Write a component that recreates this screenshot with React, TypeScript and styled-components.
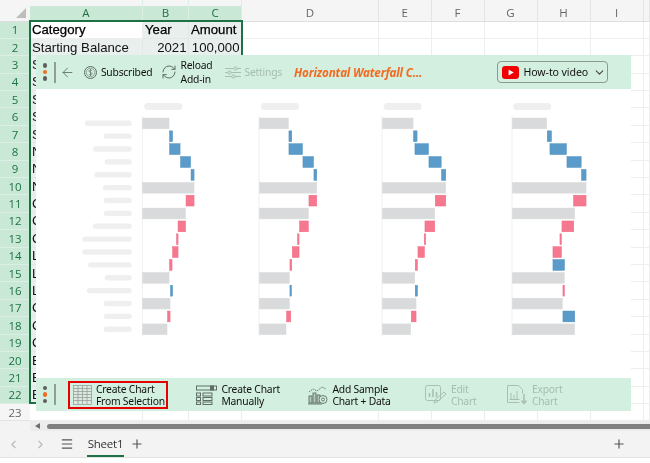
import React from "react";
import styled, { createGlobalStyle } from "styled-components";
import { ArrowLeft, ChevronDown, ChevronLeft, ChevronRight, Menu, Plus, RefreshCw } from "lucide-react";

const Global = createGlobalStyle`
  html, body { margin: 0; padding: 0; background: #fff; }
  #root { width: 650px; height: 463px; overflow: hidden; }
`;

const COLS = [113, 46, 53, 137, 52.5, 53, 53, 53, 53, 6.5];
const LETTERS = ["A", "B", "C", "D", "E", "F", "G", "H", "I", ""];

const Page = styled.div`
  position: relative;
  width: 650px;
  height: 463px;
  overflow: hidden;
  background: #fff;
  font-family: "Liberation Sans", Arial, sans-serif;
  filter: blur(0.3px);
`;
const Sheet = styled.div`
  display: grid;
  grid-template-columns: 30px ${COLS.map((c) => `${c}px`).join(" ")};
  grid-template-rows: 21.5px repeat(23, 17.4px);
`;
const Corner = styled.div`
  background: #f5f5f5;
  border-bottom: 1px solid #dedede;
  position: relative;
  &::after {
    content: "";
    position: absolute;
    right: 4px;
    bottom: 3px;
    border-style: solid;
    border-width: 0 0 10px 10px;
    border-color: transparent transparent #bdbdbd transparent;
  }
`;
const ColHead = styled.div<{ $sel?: boolean }>`
  box-sizing: border-box;
  display: flex;
  align-items: flex-end;
  justify-content: center;
  padding-bottom: 1px;
  font-size: 11.5px;
  font-family: "Open Sans", sans-serif;
  color: ${(p) => (p.$sel ? "#1e7145" : "#666")};
  background: ${(p) => (p.$sel ? "linear-gradient(#f5f5f5 6px, #c9e9d6 6px)" : "#f5f5f5")};
  border-right: 1px solid ${(p) => (p.$sel ? "#dcefe4" : "#e4e4e4")};
  border-bottom: 1px solid #dedede;
`;
const RowHead = styled.div<{ $sel?: boolean }>`
  box-sizing: border-box;
  display: flex;
  align-items: center;
  justify-content: center;
  font-size: 11.5px;
  font-family: "Open Sans", sans-serif;
  color: ${(p) => (p.$sel ? "#1e7145" : "#666")};
  background: ${(p) => (p.$sel ? "#c9e9d6" : "#f5f5f5")};
  border-bottom: 1px solid ${(p) => (p.$sel ? "#dcefe4" : "#e4e4e4")};
`;
const Cell = styled.div<{ $tint?: boolean; $right?: boolean; $head?: boolean }>`
  box-sizing: border-box;
  overflow: hidden;
  white-space: nowrap;
  display: flex;
  align-items: center;
  justify-content: ${(p) => (p.$right ? "flex-end" : "flex-start")};
  padding: 0 1.5px 0 2px;
  font-size: 13.2px;
  color: #111;
  background: ${(p) => (p.$tint ? "#e9efec" : "#fff")};
  border-right: 1px solid ${(p) => (p.$tint ? "#e2e8e5" : "#eeeeee")};
  border-bottom: 1px solid ${(p) => (p.$tint ? "#e2e8e5" : "#eeeeee")};
  ${(p) => (p.$head ? "-webkit-text-stroke: 0.25px #000; color:#000;" : "")}
`;
const Selection = styled.div`
  position: absolute;
  left: 29px;
  top: 20px;
  width: 214px;
  height: 384px;
  box-sizing: border-box;
  border: 2px solid #1e7145;
  pointer-events: none;
`;

const ScrollRow = styled.div`
  display: flex;
  align-items: center;
  height: 9.8px;
  background: #f3f3f3;
  padding-left: 30px;
`;
const ScrollTrack = styled.div`
  flex: 1;
  height: 100%;
  background: #ececec;
  display: flex;
  align-items: center;
`;
const ScrollArrow = styled.div`
  width: 15px;
  margin-right: 2px;
  display: flex;
  justify-content: center;
  &::before {
    content: "";
    border-style: solid;
    border-width: 3.5px 5px 3.5px 0;
    border-color: transparent #6e6e6e transparent transparent;
  }
`;
const ScrollThumb = styled.div`
  flex: 1;
  height: 5px;
  background: #808080;
  border-radius: 2.5px 0 0 2.5px;
`;
const TabBar = styled.div`
  display: flex;
  align-items: center;
  height: 26px;
  background: #f3f3f3;
  border-bottom: 1px solid #e2e2e2;
  color: #555;
`;
const NavIcon = styled.span<{ $ml: number; $dim?: boolean }>`
  display: flex;
  margin-left: ${(p) => p.$ml}px;
  color: ${(p) => (p.$dim ? "#b9b9b9" : "#555")};
`;
const Tab = styled.div`
  margin-left: 13px;
  width: 37px;
  height: 26px;
  box-sizing: border-box;
  display: flex;
  align-items: center;
  justify-content: center;
  font: 500 11.5px "Open Sans", sans-serif;
  letter-spacing: -0.2px;
  color: #333;
  border-bottom: 2.5px solid #1e7145;
  white-space: nowrap;
`;

const Panel = styled.div`
  position: absolute;
  left: 36px;
  top: 55px;
  width: 594.5px;
  height: 356px;
  background: #fff;
  display: flex;
  flex-direction: column;
  font-family: "Noto Sans", sans-serif;
  font-size: 10.3px;
  letter-spacing: -0.2px;
  color: #111;
`;
const TopBar = styled.div`
  flex: none;
  height: 34px;
  background: #d3efe0;
  display: flex;
  align-items: center;
`;
const Dots = styled.div`
  margin-left: 7px;
  width: 4.4px;
  display: flex;
  flex-direction: column;
  gap: 2px;
`;
const Dot = styled.span<{ $orange?: boolean }>`
  width: 4.4px;
  height: 4.4px;
  border-radius: 50%;
  background: ${(p) => (p.$orange ? "#f26b21" : "#5f5f5f")};
`;
const Divider = styled.span`
  margin-left: 7px;
  width: 1.5px;
  height: 21px;
  background: #8f9f96;
`;
const TopItem = styled.div<{ $ml: number; $off?: boolean }>`
  display: flex;
  align-items: center;
  gap: 4px;
  margin-left: ${(p) => p.$ml}px;
  color: ${(p) => (p.$off ? "#a6bdb0" : "#111")};
  line-height: 14px;
  white-space: nowrap;
  flex: none;
`;
const Title = styled.div`
  margin-left: 12px;
  font-weight: 700;
  font-style: italic;
  font-size: 11.6px;
  letter-spacing: -0.15px;
  color: #f26b21;
  white-space: nowrap;
`;
const VideoButton = styled.div`
  margin-left: auto;
  margin-right: 22.5px;
  width: 111px;
  height: 22px;
  box-sizing: border-box;
  border: 1.5px solid #8b9a90;
  border-radius: 4px;
  display: flex;
  align-items: center;
  padding-left: 3.5px;
  gap: 5px;
  font-size: 10.6px;
  letter-spacing: -0.1px;
  white-space: nowrap;
  svg { flex: none; }
`;
const Chevron = styled.span`
  display: flex;
  margin-left: auto;
  margin-right: 3px;
  color: #444;
`;
const ChartRow = styled.div`
  flex: 1;
  display: grid;
  grid-template-columns: 178.7px 123px 130px auto;
  padding: 11px 0 0 43px;
  align-items: start;
  min-height: 0;
`;
const ChartSvg = styled.svg`
  display: block;
  height: 240px;
`;
const BottomBar = styled.div`
  flex: none;
  height: 33px;
  background: #d3efe0;
  display: flex;
  align-items: center;
`;
const ActionGrid = styled.div`
  margin-left: 12.5px;
  display: grid;
  grid-template-columns: 128px 112px 116.5px 82px auto;
  align-items: center;
`;
const Action = styled.div<{ $off?: boolean; $boxed?: boolean }>`
  box-sizing: border-box;
  display: flex;
  align-items: center;
  gap: 4px;
  width: ${(p) => (p.$boxed ? "99.5px" : "auto")};
  height: 28px;
  padding-left: ${(p) => (p.$boxed ? "2.5px" : "0")};
  border: ${(p) => (p.$boxed ? "2px solid #e60000" : "none")};
  color: ${(p) => (p.$off ? "#a6bdb0" : "#111")};
  line-height: 12px;
  white-space: nowrap;
  svg { flex: none; }
`;

type Bar = [string, number, number];
const g = (w: number): Bar => ["g", 0, w];
const b = (x: number, w: number): Bar => ["b", x, w];
const r = (x: number, w: number): Bar => ["r", x, w];

const CHARTS: { data: Bar[]; width: number; axis: number; title: number }[] = [
  {
    width: 120, axis: 62.3, title: 64.3,
    data: [g(27), b(27, 3.5), b(27, 11), b(38, 10.5), b(48.5, 3.5), g(52), r(43.5, 8.5), g(43.5), r(35.5, 8), r(34, 2), r(30, 6), r(27, 3), g(27), b(28, 2.5), g(28), r(25, 3), g(25)],
  },
  {
    width: 100, axis: 0, title: 2,
    data: [g(29.7), b(29.7, 3.3), b(29.7, 14), b(43.7, 11), b(54.7, 3.3), g(58), r(49.7, 8.3), g(49.7), r(40.3, 9.3), r(38.3, 2), r(33, 7.3), r(30.7, 2.3), g(30.7), b(30.7, 2), g(30.7), r(27.3, 4.7), g(27.3)],
  },
  {
    width: 100, axis: 0, title: 1.6,
    data: [g(31.3), b(31.3, 4), b(32.7, 14), b(46.7, 12.7), b(59.3, 4.7), g(64), r(53, 11), g(53), r(42.7, 10.3), r(42, 2), r(35.7, 7), r(33, 2.7), g(33), b(33, 2.7), g(34.3), r(29, 5.3), g(29)],
  },
  {
    width: 100, axis: 0, title: 1.3,
    data: [g(35), b(35, 4.7), b(37.7, 17), b(54.7, 14.7), b(69.3, 5), g(74.3), r(61.3, 13), g(63), r(49.7, 12.3), r(47.7, 2), r(40.7, 9), b(40.7, 12), g(52.7), r(50.7, 2), g(50.7), b(50.7, 12.3), g(63)],
  },
];
const LABELS = [47, 28, 38.7, 27, 37.3, 29, 28, 28, 39, 49.3, 49.3, 43.7, 27, 44.7, 28, 28, 28];
const FILL: Record<string, string> = { g: "#d9dadb", b: "#5a9bc9", r: "#f5788f" };
const EDGE: Record<string, string> = { g: "#dcdddd", b: "#4b8fc0", r: "#f26a85" };

function Chart({ data, width, axis, title, labels }: { data: Bar[]; width: number; axis: number; title: number; labels?: boolean }) {
  return (
    <ChartSvg width={width} height={240} viewBox={`-1 0 ${width} 240`}>
      <rect x={title} y={3} width={38} height={7} rx={3.5} fill="#efefef" />
      <rect x={axis - 0.5} y={16} width={1} height={221} fill="#f0f0f0" />
      {data.map(([k, x, w], i) => (
        <rect key={i} x={axis + x + 0.25} y={18 + i * 12.87} width={w - 0.5} height={10.8} fill={FILL[k]} stroke={EDGE[k]} strokeWidth={0.5} />
      ))}
      {labels && LABELS.map((w, i) => (
        <rect key={i} x={51.7 - w} y={20.6 + i * 12.87} width={w} height={5.4} rx={2.7} fill="#efefef" />
      ))}
    </ChartSvg>
  );
}

const Stroke = "#5f6f65";
const Off = "#a9bfb3";

function DollarIcon() {
  return (
    <svg width="13" height="13" viewBox="0 0 13 13" fill="none" stroke={Stroke}>
      <circle cx="6.5" cy="6.5" r="6" strokeWidth="1" />
      <circle cx="6.5" cy="6.5" r="4.3" strokeWidth="0.6" />
      <path d="M8 5c-.3-.7-.9-1-1.5-1-.9 0-1.6.5-1.6 1.2 0 1.6 3.2.8 3.2 2.5 0 .8-.7 1.3-1.6 1.3-.7 0-1.3-.4-1.6-1M6.5 3v7" strokeWidth="0.7" />
    </svg>
  );
}
function SlidersIcon() {
  return (
    <svg width="16" height="13" viewBox="0 0 16 13" fill="none" stroke={Off} strokeWidth="1">
      <path d="M0 2.5h9M12 2.5h4M0 6.5h3M6 6.5h10M0 10.5h7M10 10.5h6" />
      <rect x="9" y="1" width="3" height="3" rx="1" />
      <rect x="3" y="5" width="3" height="3" rx="1" />
      <rect x="7" y="9" width="3" height="3" rx="1" />
    </svg>
  );
}
function YouTubeIcon() {
  return (
    <svg width="17" height="13" viewBox="0 0 17 13">
      <rect width="17" height="13" rx="3.2" fill="#f00000" />
      <path d="M6.6 3.4v6.2l5.2-3.1z" fill="#fff" />
    </svg>
  );
}
function TableIcon() {
  return (
    <svg width="19" height="20" viewBox="0 0 19 20" fill="#dfe8e0" stroke="#8b9a90" strokeWidth="0.7">
      <rect x="0.5" y="0.5" width="18" height="19" />
      <path d="M0.5 3.5h18M0.5 6.5h18M0.5 9.5h18M0.5 12.5h18M0.5 15.5h18M5 0.5v19M9.5 0.5v19M14 0.5v19" />
    </svg>
  );
}
function ManualIcon() {
  return (
    <svg width="21" height="20" viewBox="0 0 21 20" fill="none" stroke="#5f6f65" strokeWidth="1">
      <rect x="0.5" y="1" width="20" height="4" />
      <rect x="14.5" y="1" width="3" height="4" fill="#5f6f65" />
      <rect x="0.5" y="8" width="4" height="3" />
      <rect x="7" y="8" width="9" height="3" />
      <rect x="0.5" y="12.5" width="4" height="3" />
      <rect x="7" y="12.5" width="9" height="3" />
      <rect x="0.5" y="17" width="4" height="2.5" />
      <rect x="7" y="17" width="9" height="2.5" />
    </svg>
  );
}
function SampleIcon() {
  return (
    <svg width="20" height="20" viewBox="0 0 20 20" fill="none" stroke="#5f6f65" strokeWidth="0.9">
      <path d="M1 7l4-3 4 2 5-4 4 2" strokeDasharray="1.5 0.8" />
      <rect x="1" y="11" width="3" height="7" fill="#b7c8bd" />
      <rect x="5" y="8" width="3" height="10" fill="#b7c8bd" />
      <rect x="9" y="10" width="3" height="8" fill="#b7c8bd" />
      <path d="M0 19h14" />
      <circle cx="15" cy="14.5" r="4" fill="#d3efe0" />
      <circle cx="15" cy="14.5" r="1.5" />
    </svg>
  );
}
function EditIcon() {
  return (
    <svg width="22" height="20" viewBox="0 0 22 20" fill="none" stroke={Off} strokeWidth="1">
      <rect x="0.5" y="0.5" width="15" height="15" rx="2" />
      <path d="M4.5 12V8M8 12V4M11.5 12V7" strokeWidth="1.6" />
      <path d="M9 18l1-3 9-8 2 2-9 8z" />
    </svg>
  );
}
function ExportIcon() {
  return (
    <svg width="21" height="20" viewBox="0 0 21 20" fill="none" stroke={Off} strokeWidth="1">
      <path d="M0.5 0.5h11l4 4v4M0.5 0.5v17h12" />
      <path d="M4 14V8M7 14V10M10 14V6M2.5 14.5h10" />
      <path d="M17 9v9M14.5 15.5l2.5 3 2.5-3" strokeWidth="1.6" />
    </svg>
  );
}

const ROW_LETTERS = "SSSSSNNNCCCLLLCCCEEE".split("");

export default function App() {
  const rows: React.ReactNode[] = [];
  for (let i = 1; i <= 23; i++) {
    const sel = i <= 22;
    rows.push(<RowHead key={`h${i}`} $sel={sel}>{i}</RowHead>);
    COLS.forEach((_, c) => {
      let text: string = "";
      let right = false;
      if (i === 1) text = ["Category", "Year", "Amount"][c] ?? "";
      else if (i === 2) {
        text = ["Starting Balance", "2021", "100,000"][c] ?? "";
        right = c > 0;
      } else if (c === 0 && i <= 22) text = ROW_LETTERS[i - 3];
      rows.push(
        <Cell key={`${i}-${c}`} $tint={sel && c < 3 && !(i === 1 && c === 0)} $right={right} $head={i === 1}>
          {text}
        </Cell>
      );
    });
  }
  return (
    <Page>
      <Global />
      <Sheet>
        <Corner />
        {LETTERS.map((l, c) => (
          <ColHead key={c} $sel={c < 3}>{l}</ColHead>
        ))}
        {rows}
      </Sheet>
      <ScrollRow>
        <ScrollTrack>
          <ScrollArrow />
          <ScrollThumb />
        </ScrollTrack>
      </ScrollRow>
      <TabBar>
        <NavIcon $ml={7} $dim><ChevronLeft size={13} /></NavIcon>
        <NavIcon $ml={14} $dim><ChevronRight size={13} /></NavIcon>
        <NavIcon $ml={13}><Menu size={14} /></NavIcon>
        <Tab>Sheet1</Tab>
        <NavIcon $ml={6}><Plus size={14} /></NavIcon>
        <NavIcon $ml={468}><Plus size={14} /></NavIcon>
      </TabBar>
      <Selection />
      <Panel>
        <TopBar>
          <Dots><Dot /><Dot $orange /><Dot /></Dots>
          <Divider />
          <TopItem $ml={4.5}><ArrowLeft size={15} color={Stroke} strokeWidth={1.4} /></TopItem>
          <TopItem $ml={8.5}><DollarIcon />Subscribed</TopItem>
          <TopItem $ml={8}>
            <RefreshCw size={16} color={Stroke} strokeWidth={1.5} />
            <span>Reload<br />Add-in</span>
          </TopItem>
          <TopItem $ml={12} $off><SlidersIcon />Settings</TopItem>
          <Title>Horizontal Waterfall C...</Title>
          <VideoButton>
            <YouTubeIcon />
            How-to video
            <Chevron><ChevronDown size={13} /></Chevron>
          </VideoButton>
        </TopBar>
        <ChartRow>
          {CHARTS.map((c, i) => (
            <Chart key={i} {...c} labels={i === 0} />
          ))}
        </ChartRow>
        <BottomBar>
          <Dots><Dot /><Dot $orange /><Dot /></Dots>
          <Divider />
          <ActionGrid>
            <Action $boxed><TableIcon /><span>Create Chart<br />From Selection</span></Action>
            <Action><ManualIcon /><span>Create Chart<br />Manually</span></Action>
            <Action><SampleIcon /><span>Add Sample<br />Chart + Data</span></Action>
            <Action $off><EditIcon /><span>Edit<br />Chart</span></Action>
            <Action $off><ExportIcon /><span>Export<br />Chart</span></Action>
          </ActionGrid>
        </BottomBar>
      </Panel>
    </Page>
  );
}
